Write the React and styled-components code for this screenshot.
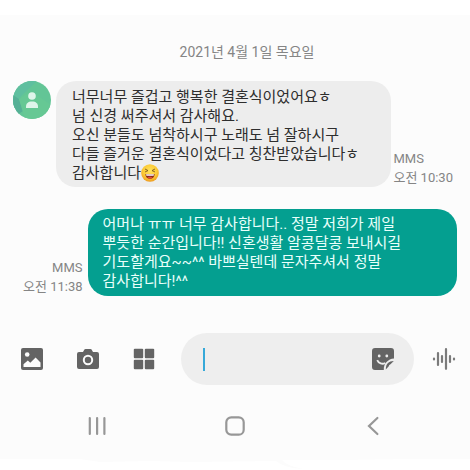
import React, { useState } from 'react';
import styled, { createGlobalStyle } from 'styled-components';

const received = [
  '너무너무 즐겁고 행복한 결혼식이었어요ㅎ',
  '넘 신경 써주셔서 감사해요.',
  '오신 분들도 넘착하시구 노래도 넘 잘하시구',
  '다들 즐거운 결혼식이었다고 칭찬받았습니다ㅎ',
  '감사합니다',
];

const sent = [
  '어머나 ㅠㅠ 너무 감사합니다.. 정말 저희가 제일',
  '뿌듯한 순간입니다!! 신혼생활 알콩달콩 보내시길',
  '기도할게요~~^^ 바쁘실텐데 문자주셔서 정말',
  '감사합니다!^^',
];

// Icons
const PersonIcon = () => (
  <svg width="38" height="38" viewBox="0 0 38 38" aria-hidden="true">
    <defs>
      <clipPath id="avatar"><circle cx="19" cy="19" r="19" /></clipPath>
    </defs>
    <g clipPath="url(#avatar)">
      <rect width="38" height="38" fill="#63c596" />
      <path d="M0 0H24L8 15L0 30Z" fill="#5fbf9f" />
      <path d="M0 14L6 18L10 30L4 34L0 28Z" fill="#55b096" />
      <path d="M6 18L18 10L38 24V38H12Z" fill="#66c894" />
    </g>
    <circle cx="19" cy="15" r="3.8" fill="#dff5ea" />
    <path d="M13 27V25.5C13 22.5 15 20.5 19 20.5S25 22.5 25 25.5V27Z" fill="#dff5ea" />
  </svg>
);

const LaughIcon = () => (
  <svg width="18" height="18" viewBox="0 0 18 18" role="img" aria-label="😆">
    <defs>
      <radialGradient id="face" cx="50%" cy="38%" r="62%">
        <stop offset="0" stopColor="#ffe45e" />
        <stop offset="0.65" stopColor="#fbc934" />
        <stop offset="1" stopColor="#ee9a20" />
      </radialGradient>
    </defs>
    <circle cx="9" cy="9" r="8.8" fill="url(#face)" />
    <path d="M4.4 5.2L7 6.6L4.4 7.8M13.6 5.2L11 6.6L13.6 7.8" fill="none" stroke="#7a531c" strokeWidth="0.9" strokeLinecap="round" strokeLinejoin="round" />
    <path d="M4.4 10H13.6C13.6 13.2 11.8 14.8 9 14.8S4.4 13.2 4.4 10Z" fill="#8a2a1a" />
    <path d="M5 10.2H13L12.6 11.8H5.4Z" fill="#fff" />
    <path d="M6.3 13.6Q9 12 11.7 13.6Q9 15.6 6.3 13.6Z" fill="#e84a3c" />
  </svg>
);

const GalleryIcon = () => (
  <svg width="22" height="22" viewBox="0 0 22 22" aria-hidden="true">
    <rect width="22" height="22" rx="2" fill="#646464" />
    <circle cx="6.2" cy="6.5" r="2.3" fill="#fcfcfc" />
    <path d="M2.5 19V16.2L6.8 12.6L9.3 14.8L14.6 9.6L19.5 14.6V19Z" fill="#fcfcfc" />
  </svg>
);

const CameraIcon = () => (
  <svg width="22" height="20" viewBox="0 0 22 20" aria-hidden="true">
    <path d="M2 3H6L7.4 0.6Q7.8 0 8.5 0H13.5Q14.2 0 14.6 0.6L16 3H20Q22 3 22 5V18Q22 20 20 20H2Q0 20 0 18V5Q0 3 2 3Z" fill="#646464" />
    <circle cx="11" cy="11" r="4.2" fill="none" stroke="#fcfcfc" strokeWidth="2" />
  </svg>
);

const GridIcon = () => (
  <svg width="22" height="22" viewBox="0 0 22 22" fill="#646464" aria-hidden="true">
    <rect x="0.8" y="0.8" width="9.4" height="9.4" rx="1" />
    <rect x="11.8" y="0.8" width="9.4" height="9.4" rx="1" />
    <rect x="0.8" y="11.8" width="9.4" height="9.4" rx="1" />
    <rect x="11.8" y="11.8" width="9.4" height="9.4" rx="1" />
  </svg>
);

const StickerIcon = () => (
  <svg width="22" height="22" viewBox="0 0 22 22" aria-hidden="true">
    <path d="M3 0H19Q22 0 22 3V10.5C16 11 11.5 15.5 11.8 22H3Q0 22 0 19V3Q0 0 3 0Z" fill="#646464" />
    <path d="M13.8 21.5C13.8 18 14.8 16 16 15C17.4 13.8 19 13.2 21.8 13L18.5 16.2Q17 16.6 16.6 18.6Z" fill="#646464" />
    <circle cx="7.2" cy="8" r="1.4" fill="#eee" />
    <circle cx="14.8" cy="8" r="1.4" fill="#eee" />
    <path d="M5.2 12.2C6.6 15.6 10.4 16.6 13.4 15" fill="none" stroke="#eee" strokeWidth="1.8" />
  </svg>
);

const VoiceIcon = () => (
  <svg width="24" height="22" viewBox="0 0 24 22" fill="none" stroke="#7b7b7b" strokeWidth="2.2" strokeLinecap="round" aria-hidden="true">
    <path d="M2 10.5V11.5M6 5V17M10 8V14M14 1.2V20.8M18 8V14M22 10.5V11.5" />
  </svg>
);

const RecentIcon = () => (
  <svg width="20" height="20" viewBox="0 0 20 20" fill="none" stroke="#979797" strokeWidth="2.2" strokeLinecap="round" aria-hidden="true">
    <path d="M2.8 2V18M10.1 2V18M17.4 2V18" />
  </svg>
);

const HomeIcon = () => (
  <svg width="20" height="20" viewBox="0 0 20 20" fill="none" stroke="#979797" strokeWidth="2.2" aria-hidden="true">
    <rect x="1.3" y="1.3" width="17.4" height="17.4" rx="5" />
  </svg>
);

const BackIcon = () => (
  <svg width="20" height="20" viewBox="0 0 20 20" fill="none" stroke="#979797" strokeWidth="2.2" strokeLinecap="round" aria-hidden="true">
    <path d="M14.4 2L6 10L14.4 18" />
  </svg>
);

// Uneven lower edge of the screen
const BottomEdge = () => (
  <Edge viewBox="0 0 470 12" preserveAspectRatio="none" aria-hidden="true">
    <path d="M0 0H470V1L410 1L340 2L282 2Q286 8 304 11Q284 10 276 3L190 4L150 3L100 4L80 1L0 1Z" fill="#fcfcfc" />
  </Edge>
);

const Lines = ({ lines }) => lines.map((line, i) => (
  <React.Fragment key={line}>
    {i > 0 && <br />}
    {line}
  </React.Fragment>
));

const App = () => {
  const [message, setMessage] = useState('');

  return (
    <>
      <GlobalStyle />
      <Screen>
        <DateHeader>2021년 4월 1일 목요일</DateHeader>
        <Conversation>
          <ReceivedRow>
            <PersonIcon />
            <Bubble>
              <Lines lines={received} />
              <LaughIcon />
            </Bubble>
            <Stamp>MMS<br />오전 10:30</Stamp>
          </ReceivedRow>
          <SentRow>
            <Stamp $right>MMS<br />오전 11:38</Stamp>
            <Bubble $sent><Lines lines={sent} /></Bubble>
          </SentRow>
        </Conversation>
        <Composer>
          <Tools>
            <IconButton type="button" aria-label="갤러리"><GalleryIcon /></IconButton>
            <IconButton type="button" aria-label="카메라"><CameraIcon /></IconButton>
            <IconButton type="button" aria-label="더보기"><GridIcon /></IconButton>
          </Tools>
          <InputBox>
            {message === '' && <Caret />}
            <MessageInput
              type="text"
              aria-label="메시지"
              value={message}
              onChange={(e) => setMessage(e.target.value)}
            />
            <IconButton type="button" aria-label="스티커"><StickerIcon /></IconButton>
          </InputBox>
          <IconButton type="button" aria-label="음성"><VoiceIcon /></IconButton>
        </Composer>
        <NavBar>
          <IconButton type="button" aria-label="최근 앱"><RecentIcon /></IconButton>
          <IconButton type="button" aria-label="홈"><HomeIcon /></IconButton>
          <IconButton type="button" aria-label="뒤로"><BackIcon /></IconButton>
        </NavBar>
      </Screen>
      <BottomEdge />
    </>
  );
};

// Styled components
const GlobalStyle = createGlobalStyle`
  body {
    background: #fff;
    font-family: Roboto, "Noto Sans CJK KR", sans-serif;
    margin: 0;
  }
`;

const Screen = styled.main`
  background: #fcfcfc;
  display: flex;
  flex-direction: column;
  margin-top: 15px;
`;

const Edge = styled.svg`
  display: block;
  height: 12px;
  width: 100%;
`;

const DateHeader = styled.header`
  color: #858585;
  font-size: 14px;
  line-height: 20px;
  margin-left: 24px;
  padding: 27px 0 19px;
  text-align: center;
`;

const Conversation = styled.section`
  display: flex;
  flex-direction: column;
  gap: 22px;
`;

const ReceivedRow = styled.div`
  display: flex;
  padding: 0 17px 0 13px;

  > svg {
    flex: none;
    margin-right: 5px;
  }
`;

const SentRow = styled.div`
  display: flex;
  padding: 0 13px 0 23px;
`;

const Bubble = styled.p`
  background: ${(props) => (props.$sent ? '#049f90' : '#ededed')};
  border-radius: 20px;
  color: ${(props) => (props.$sent ? '#e9fffb' : '#2e2e2e')};
  flex: 1;
  font-size: 15px;
  line-height: 19px;
  margin: 0;
  padding: ${(props) => (props.$sent ? '6px 15px 5px' : '7px 16px 4px')};

  svg {
    vertical-align: -4px;
  }
`;

const Stamp = styled.div`
  align-self: flex-end;
  color: #858585;
  flex: none;
  font-size: 13px;
  line-height: 19px;
  margin: ${(props) => (props.$right ? '0 5px 0 0' : '0 0 0 2px')};
  text-align: ${(props) => (props.$right ? 'right' : 'left')};
`;

const Composer = styled.form`
  align-items: center;
  display: flex;
  padding: 37px 14px 0 20px;
`;

const Tools = styled.div`
  display: flex;
  gap: 32px;
  margin-right: 25px;
`;

const IconButton = styled.button`
  align-items: center;
  background: none;
  border: 0;
  cursor: pointer;
  display: flex;
  height: 24px;
  justify-content: center;
  padding: 0;
  width: 24px;
`;

const InputBox = styled.div`
  align-items: center;
  background: #eee;
  border-radius: 26px;
  display: flex;
  flex: 1;
  height: 52px;
  margin-right: 18px;
  min-width: 0;
  padding: 0 19px 0 22px;
`;

const Caret = styled.span`
  background: #36a9d9;
  height: 23px;
  width: 2px;
`;

const MessageInput = styled.input`
  background: none;
  border: 0;
  color: #262626;
  flex: 1;
  font-family: inherit;
  font-size: 15px;
  min-width: 0;
  outline: none;
  padding: 0;
`;

const NavBar = styled.nav`
  display: flex;
  justify-content: space-between;
  padding: 29px 85px 20px;
`;

export default App;
